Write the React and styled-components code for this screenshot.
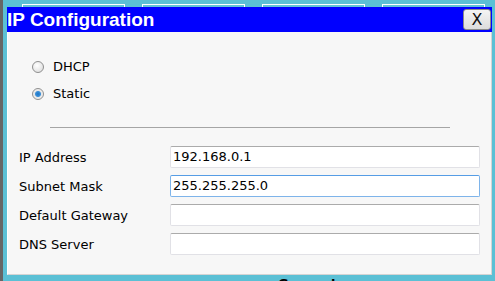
import styled, { createGlobalStyle } from 'styled-components';

const GlobalStyle = createGlobalStyle`
  html, body {
    margin: 0;
    padding: 0;
    background: #5bc0d5;
  }
  body {
    font-family: 'DejaVu Sans', Verdana, sans-serif;
  }
`;

const Page = styled.div`
  width: 495px;
  height: 281px;
  overflow: hidden;
  box-sizing: border-box;
  background: #5bc0d5;
  border-left: 3px solid #666666;
  display: flex;
  flex-direction: column;
  & > * {
    flex: none;
  }
`;

const TabStrip = styled.div`
  height: 7px;
  padding-top: 4px;
  box-sizing: border-box;
  overflow: hidden;
  display: flex;
  gap: 17px;
  padding-left: 19px;
`;

const Tab = styled.div`
  width: 103px;
  height: 20px;
  flex: none;
  box-sizing: border-box;
  border: 1px solid #ffffff;
  background: #62c3d8;
`;

const Dialog = styled.div`
  margin-left: 4px;
  width: 485px;
  display: flex;
  flex-direction: column;
  & > * {
    flex: none;
  }
`;

const TitleBar = styled.div`
  height: 25px;
  background: #0000ff;
  display: flex;
  align-items: center;
  justify-content: space-between;
  padding-right: 1px;
`;

const Title = styled.span`
  font-family: 'Liberation Sans', Arial, sans-serif;
  font-weight: bold;
  font-size: 19px;
  color: #ffffff;
  line-height: 25px;
  margin-top: -1px;
`;

const CloseButton = styled.button`
  width: 28px;
  height: 21px;
  padding: 0;
  border: 1px solid #8a8a8a;
  border-radius: 3px;
  background: linear-gradient(#f4f4f4, #dcdcdc);
  font-family: 'DejaVu Sans', Verdana, sans-serif;
  font-size: 16px;
  color: #111111;
  line-height: 18px;
  display: flex;
  align-items: center;
  justify-content: center;
`;

const Body = styled.div`
  height: 243px;
  box-sizing: border-box;
  background: #f7f7f7;
  border: 1px solid #d4d4d4;
  border-top: none;
  border-left-color: #ffffff;
  padding: 26px 9px 0 11px;
  display: flex;
  flex-direction: column;
`;

const RadioGroup = styled.div`
  display: flex;
  flex-direction: column;
  gap: 10px;
  padding-left: 13px;
`;

const RadioRow = styled.label`
  display: flex;
  align-items: center;
  gap: 9px;
  height: 17px;
  font-size: 13px;
  color: #000000;
`;

const RadioDot = styled.span`
  width: 12px;
  height: 12px;
  box-sizing: border-box;
  border-radius: 50%;
  border: 1px solid #8f8f8f;
  background: ${(p) =>
    p.$checked
      ? 'radial-gradient(circle, #1b74c4 0, #3b8fd8 2.5px, #e6e6e6 3.5px, #f4f4f4 6px)'
      : 'radial-gradient(circle at 40% 35%, #ffffff, #d8d8d8)'};
  flex: none;
`;

const Divider = styled.hr`
  margin: 25px 32px 0 31px;
  border: none;
  border-top: 1px solid #a5a5a5;
  height: 0;
`;

const Form = styled.div`
  margin-top: 18px;
  display: grid;
  grid-template-columns: 151px 310px;
  row-gap: 7px;
  align-items: center;
`;

const FieldLabel = styled.span`
  font-size: 13px;
  color: #000000;
`;

const Field = styled.div`
  height: 22px;
  box-sizing: border-box;
  background: #ffffff;
  border: 1px solid ${(p) => (p.$focused ? '#7eb4ea' : '#e1e1e6')};
  border-top-color: ${(p) => (p.$focused ? '#569de5' : '#ababab')};
  border-radius: 2px;
  padding-left: 2px;
  font-size: 13px;
  line-height: 20px;
  color: #000000;
`;

const Behind = styled.div`
  margin-top: 2px;
  padding-left: 275px;
  font-size: 13px;
  font-weight: bold;
  color: #000000;
  line-height: 13px;
`;

const fields = [
  { label: 'IP Address', value: '192.168.0.1' },
  { label: 'Subnet Mask', value: '255.255.255.0', focused: true },
  { label: 'Default Gateway', value: '' },
  { label: 'DNS Server', value: '' },
];

export default function App() {
  return (
    <>
      <GlobalStyle />
      <Page>
        <TabStrip>
          <Tab />
          <Tab />
          <Tab />
          <Tab />
        </TabStrip>
        <Dialog>
          <TitleBar>
            <Title>IP Configuration</Title>
            <CloseButton>X</CloseButton>
          </TitleBar>
          <Body>
            <RadioGroup>
              <RadioRow>
                <RadioDot />
                DHCP
              </RadioRow>
              <RadioRow>
                <RadioDot $checked />
                Static
              </RadioRow>
            </RadioGroup>
            <Divider />
            <Form>
              {fields.map((f) => [
                <FieldLabel key={f.label + '-l'}>{f.label}</FieldLabel>,
                <Field key={f.label + '-f'} $focused={f.focused}>
                  {f.value}
                </Field>,
              ])}
            </Form>
          </Body>
        </Dialog>
        <Behind>Generator</Behind>
      </Page>
    </>
  );
}
